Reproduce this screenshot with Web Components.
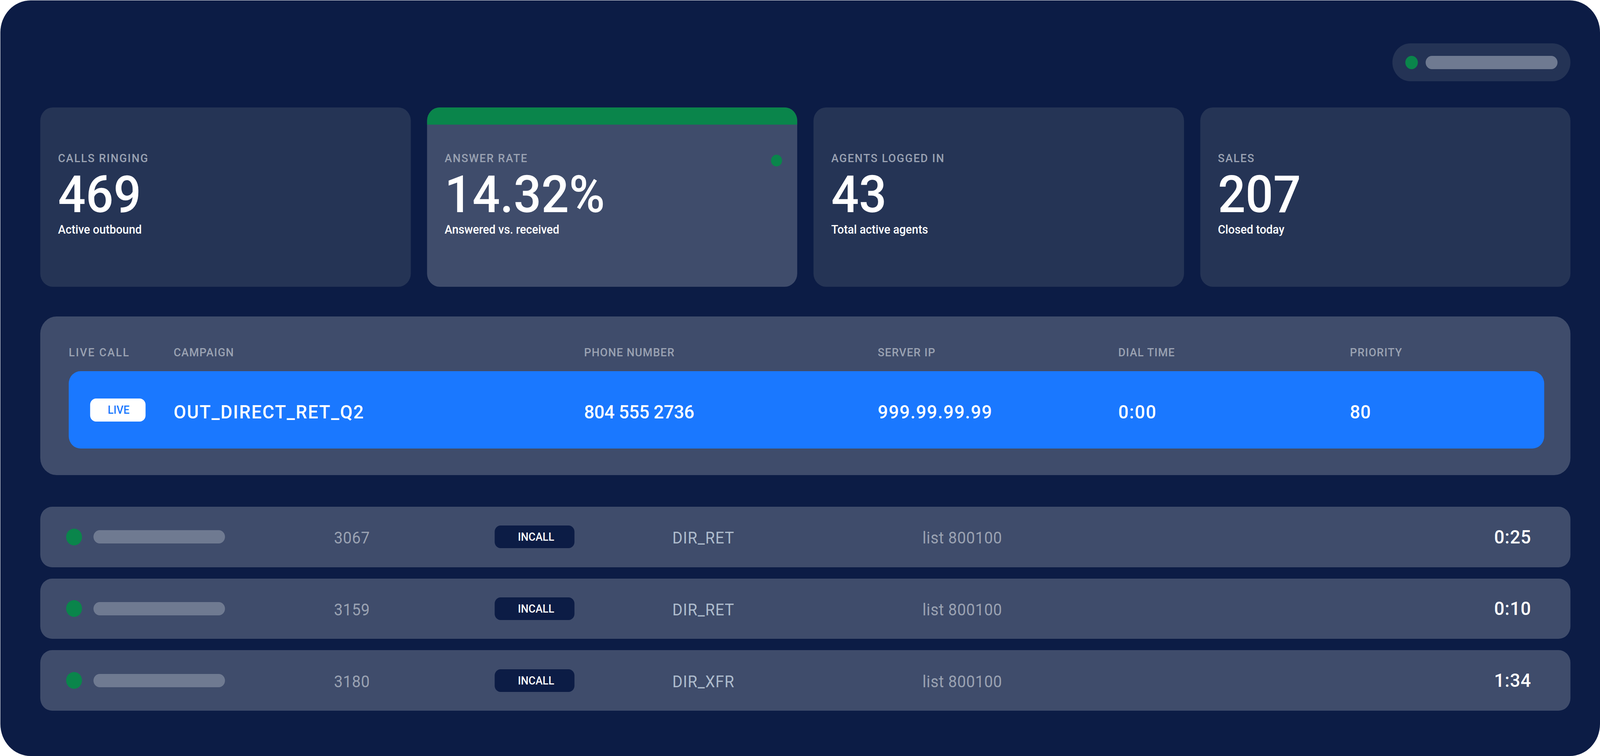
<!DOCTYPE html>
<html><head><meta charset="utf-8">
<style>
html,body{margin:0;background:#fff;overflow:hidden}
body{font-family:Roboto,"Liberation Sans",sans-serif;color:#fff}
</style></head>
<body>
<call-board>
  <status-pill slot="top"></status-pill>
  <stat-card slot="stats"><span slot="label">CALLS RINGING</span><span slot="value">469</span><span slot="sub">Active outbound</span></stat-card>
  <stat-card slot="stats" active><span slot="label">ANSWER RATE</span><span slot="value">14.32%</span><span slot="sub">Answered vs. received</span></stat-card>
  <stat-card slot="stats"><span slot="label">AGENTS LOGGED IN</span><span slot="value">43</span><span slot="sub">Total active agents</span></stat-card>
  <stat-card slot="stats"><span slot="label">SALES</span><span slot="value">207</span><span slot="sub">Closed today</span></stat-card>
  <live-panel slot="live"></live-panel>
  <agent-row slot="rows" ext="3067" camp="DIR_RET" list="list 800100" time="0:25"></agent-row>
  <agent-row slot="rows" ext="3159" camp="DIR_RET" list="list 800100" time="0:10"></agent-row>
  <agent-row slot="rows" ext="3180" camp="DIR_XFR" list="list 800100" time="1:34"></agent-row>
</call-board>
<script>
function def(name, html, onConnect){
  customElements.define(name, class extends HTMLElement{
    constructor(){super();this.attachShadow({mode:'open'}).innerHTML=html;}
    connectedCallback(){
      this.shadowRoot.querySelectorAll('[data-a]').forEach(e=>{e.textContent=this.getAttribute(e.dataset.a)||''});
      if(onConnect)onConnect(this);
    }
  });
}
def('call-board',`<style>
:host{display:block;width:100%;height:1935px;overflow:hidden}
.fit{width:4331px;height:1935px;transform-origin:0 0;padding-top:1px;box-sizing:border-box}
.frame{box-sizing:border-box;height:1934px;width:4330px;margin:0 0 0 1px;background:#0c1c45;border-radius:82px;padding:110px 80px 0 108px;display:flex;flex-direction:column}
.top{display:flex;justify-content:flex-end;margin-bottom:67px}
.stats{display:grid;grid-template-columns:repeat(4,1fr);gap:44px;margin-bottom:76px}
.rows{display:flex;flex-direction:column;gap:29px;margin-top:81px}
</style><div class="fit"><div class="frame">
<div class="top"><slot name="top"></slot></div>
<div class="stats"><slot name="stats"></slot></div>
<slot name="live"></slot>
<div class="rows"><slot name="rows"></slot></div>
</div></div>`, el=>{
  /* the design is 4331 wide; fit it to the width the window really has */
  const s=Math.min(1,Math.floor(window.innerWidth/4331*1e5)/1e5);
  el.shadowRoot.querySelector('.fit').style.transform='scaleX('+s+')';
});
def('status-pill',`<style>
:host{display:flex;box-sizing:border-box;align-items:center;gap:21px;width:482px;height:97px;padding:0 35px;border-radius:48.5px;background:#243355}
i{width:34px;height:34px;border-radius:50%;background:#0a854b}
b{flex:1;height:34px;border-radius:17px;background:#6f7a91}
</style><i></i><b></b>`);
def('stat-card',`<style>
:host{display:flex;flex-direction:column;height:459px;border-radius:34px;overflow:hidden;background:#253455;position:relative}
:host([active]){background:#3f4c6b}
.bar{display:none;height:44px;background:#0a854b;flex:none}
:host([active]) .bar{display:block}
.body{padding:111.5px 48px 0;display:flex;flex-direction:column}
:host([active]) .body{padding-top:67.5px}
.label{font-size:30px;line-height:36px;letter-spacing:2.2px;color:#9aa2b2;font-weight:500}
.value{font-size:132px;line-height:132px;margin-top:9.5px;font-weight:500}
.sub{font-size:31px;line-height:40px;margin-top:3.5px;font-weight:500}
.dot{display:none;position:absolute;left:931px;top:121px;width:30px;height:30px;border-radius:50%;background:#0a854b}
:host([active]) .dot{display:block}
</style><div class="bar"></div><div class="body">
<div class="label"><slot name="label"></slot></div>
<div class="value"><slot name="value"></slot></div>
<div class="sub"><slot name="sub"></slot></div>
</div><div class="dot"></div>`);
const COLS='grid-template-columns:284px 1111px 795px 651px 627px 1fr';
def('live-panel',`<style>
:host{display:block;height:406px;box-sizing:border-box;padding:73.5px 71px 0 77px;border-radius:44px;background:#3f4c6b}
.head,.row{display:grid;${COLS};align-items:center}
.head{font-size:30px;line-height:36px;letter-spacing:1.4px;color:#9aa2b2;font-weight:500;margin-bottom:30.5px}
.lc{letter-spacing:2.8px}
.row{height:198px;background:#1a78ff;border-radius:32px;font-size:49px;font-weight:500}
.row>div+div{padding-top:10px}
.badge{width:150px;height:59px;margin-left:58px;border-radius:16px;background:#fff;color:#1a78ff;font-size:29px;font-weight:500;display:flex;align-items:center;justify-content:center;padding-left:4px;box-sizing:border-box}
.l1{letter-spacing:2.3px}.l2{letter-spacing:-.4px}.l3{letter-spacing:1.6px}.l4{letter-spacing:2px}.l5{letter-spacing:.6px}
</style>
<div class="head"><div class="lc">LIVE CALL</div><div>CAMPAIGN</div><div>PHONE NUMBER</div><div>SERVER IP</div><div>DIAL TIME</div><div>PRIORITY</div></div>
<div class="row"><div><div class="badge">LIVE</div></div><div class="l1">OUT_DIRECT_RET_Q2</div><div class="l2">804 555 2736</div><div class="l3">999.99.99.99</div><div class="l4">0:00</div><div class="l5">80</div></div>`);
def('agent-row',`<style>
:host{display:grid;grid-template-columns:725px 435px 481px 677px 1fr;align-items:center;box-sizing:border-box;height:154.67px;padding:0 106px 0 70px;border-radius:32px;background:#3f4c6b}
.name{display:flex;align-items:center;gap:31px}
i{width:43px;height:43px;border-radius:50%;background:#0a854b}
b{width:356px;height:34px;border-radius:17px;background:#6f7a91}
.m{font-size:42px;color:#9aa2b2;padding-top:5px;letter-spacing:.7px}
.c{font-size:42px;color:#aebccd;padding-top:5px;letter-spacing:1.3px}
.badge{width:216px;height:58px;border-radius:16px;background:#0c1c45;font-size:29px;font-weight:500;display:flex;align-items:center;justify-content:center;padding-left:8px;box-sizing:border-box}
.t{font-size:49px;font-weight:500;text-align:right;letter-spacing:1px}
.tail{display:flex;justify-content:space-between;align-items:center}
</style>
<div class="name"><i></i><b></b></div>
<div class="m" data-a="ext"></div>
<div><div class="badge">INCALL</div></div>
<div class="c" data-a="camp"></div>
<div class="tail"><div class="m" data-a="list"></div><div class="t" data-a="time"></div></div>`);
</script>
</body></html>
